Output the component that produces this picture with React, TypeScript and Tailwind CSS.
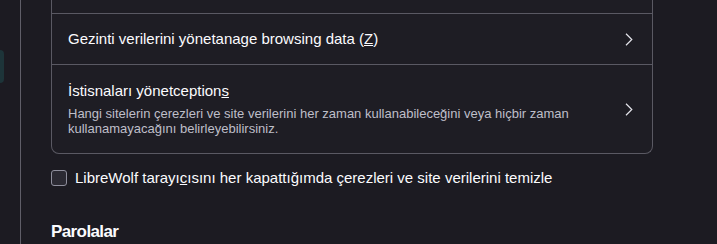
import React from "react";

function Chevron() {
  return (
    <svg width="8" height="13" viewBox="0 0 8 13" fill="none" className="shrink-0">
      <path d="M1 0.8 L6.8 6.5 L1 12.2" stroke="#e4e4ea" strokeWidth="1.2" />
    </svg>
  );
}

export default function App() {
  return (
    <div
      className="w-[717px] h-[244px] bg-[#1c1b22] flex overflow-hidden text-[#fbfbfe]"
      style={{ fontFamily: '"Liberation Sans", Arial, sans-serif' }}
    >
      <div className="w-[21px] shrink-0 border-r border-[#5f5e68] flex flex-col">
        <div className="h-[50px]" />
        <div className="w-[4px] h-[33px] rounded-r-[6px] bg-[#1d3439]" />
      </div>
      <div className="flex-1 pl-[30px] flex flex-col">
        <div className="w-[602px] border-x border-b border-[#5a5963] rounded-b-[8px] bg-[#1e1d24]">
          <div className="h-[13px]" />
          <div className="h-[51px] border-t border-[#5a5963] flex items-center pl-[16px] pr-[19px]">
            <span className="flex-1 text-[15px]">
              Gezinti verilerini yönetanage browsing data (<u>Z</u>)
            </span>
            <Chevron />
          </div>
          <div className="h-[89px] border-t border-[#5a5963] flex items-center pl-[16px] pr-[19px]">
            <div className="flex-1 flex flex-col">
              <span className="text-[15px] leading-[18px]">
                İstisnaları yönetception<u>s</u>
              </span>
              <span className="text-[13px] leading-[14.5px] text-[#bfbfc9] mt-[7px] w-[530px]">
                Hangi sitelerin çerezleri ve site verilerini her zaman kullanabileceğini veya hiçbir zaman kullanamayacağını belirleyebilirsiniz.
              </span>
            </div>
            <Chevron />
          </div>
        </div>
        <label className="flex items-center mt-[16px] h-[16px]">
          <span className="w-[16px] h-[16px] rounded-[3px] border border-[#8f8f9d] bg-[#2b2a33] shrink-0" />
          <span className="ml-[8px] text-[15px] leading-[18px]">
            LibreWolf tarayı<u>c</u>ısını her kapattığımda çerezleri ve site verilerini temizle
          </span>
        </label>
        <div className="mt-[36px] text-[17px] leading-[20px] font-bold tracking-[-0.6px]">Parolalar</div>
      </div>
    </div>
  );
}
